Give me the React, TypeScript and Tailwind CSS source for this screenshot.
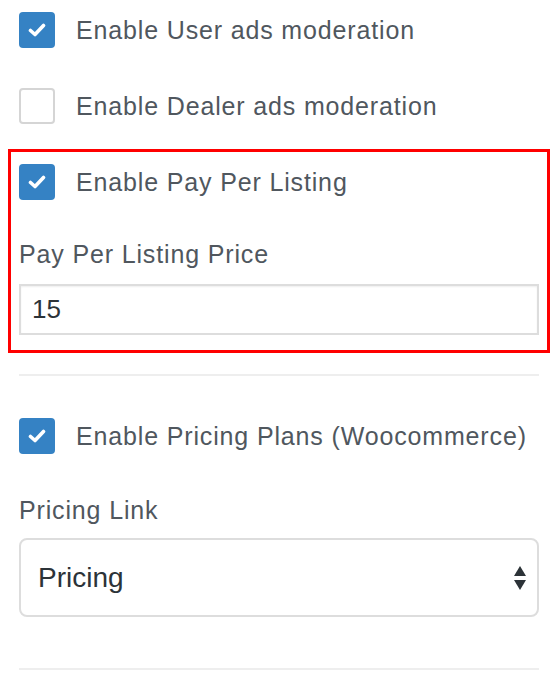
const font = "font-['Liberation_Sans','Helvetica_Neue',Arial,sans-serif]";

function Check({ checked }: { checked: boolean }) {
  return (
    <span
      className={`flex h-[36px] w-[36px] shrink-0 items-center justify-center rounded-[4px] ${
        checked ? "bg-[#3582c4]" : "border-2 border-[#d5d5d5] bg-white"
      }`}
    >
      {checked && (
        <svg width="18" height="14" viewBox="0 0 18 14">
          <path
            d="M2.5 7.5 L7 11.5 L15.5 2.5"
            fill="none"
            stroke="#fff"
            strokeWidth="3.6"
            strokeLinecap="round"
            strokeLinejoin="round"
          />
        </svg>
      )}
    </span>
  );
}

function CheckRow({ checked, label }: { checked: boolean; label: string }) {
  return (
    <div className="flex items-center gap-[21px]">
      <Check checked={checked} />
      <span className="text-[25px] leading-none tracking-[0.85px] text-[#50575e]">{label}</span>
    </div>
  );
}

export default function App() {
  return (
    <div className={`${font} h-[691px] w-[560px] bg-white px-[19px] pt-[12px]`}>
      <CheckRow checked label="Enable User ads moderation" />
      <div className="mt-[40px]">
        <CheckRow checked={false} label="Enable Dealer ads moderation" />
      </div>

      {/* highlighted block */}
      <div className="-mx-[11px] mt-[25px] w-[542px] border-[3px] border-[#ff0000] px-[8px] pt-[12px] pb-[15px]">
        <CheckRow checked label="Enable Pay Per Listing" />
        <div className="mt-[42px] text-[25px] leading-none tracking-[0.85px] text-[#50575e]">
          Pay Per Listing Price
        </div>
        <div className="mt-[17px] flex h-[51px] items-center border-2 border-[#dddddd] bg-white px-[11px] text-[26px] text-[#2c3338] shadow-[inset_0_1px_2px_rgba(0,0,0,0.07)]">
          15
        </div>
      </div>

      <div className="mt-[21px] h-[2px] w-[520px] bg-[#eeeeee]" />

      <div className="mt-[42px]">
        <CheckRow checked label="Enable Pricing Plans (Woocommerce)" />
      </div>
      <div className="mt-[44px] text-[25px] leading-none tracking-[0.85px] text-[#50575e]">
        Pricing Link
      </div>
      <div className="mt-[15px] flex h-[79px] w-[520px] items-center justify-between rounded-[8px] border-2 border-[#dddddd] bg-white pl-[17px] pr-[10px] text-[28px] text-[#2c3338]">
        <span>Pricing</span>
        <svg width="14" height="26" viewBox="0 0 14 26">
          <path d="M7 1 L13 11 L1 11 Z" fill="#2c3338" />
          <path d="M1 15 L13 15 L7 25 Z" fill="#2c3338" />
        </svg>
      </div>

      <div className="mt-[51px] h-[2px] w-[520px] bg-[#eeeeee]" />
    </div>
  );
}
